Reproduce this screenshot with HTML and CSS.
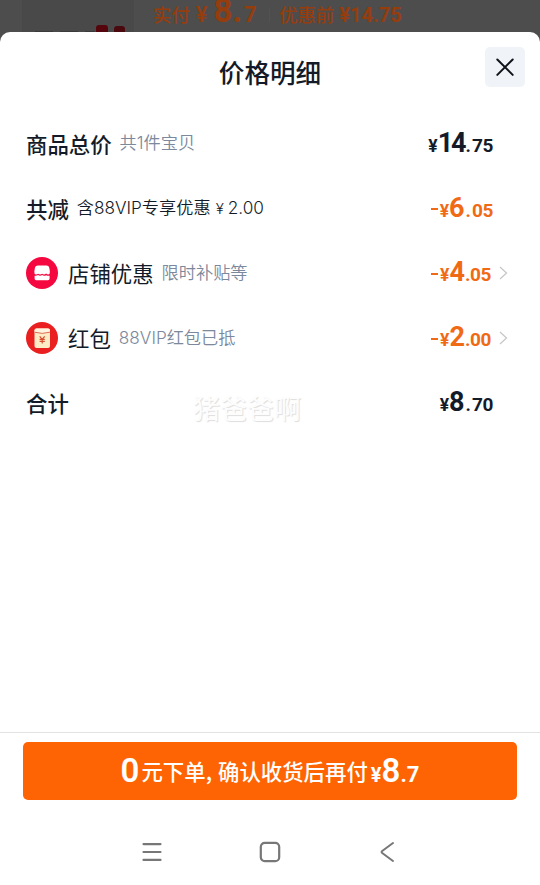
FILE: index.html
```html
<!DOCTYPE html>
<html lang="zh-CN">
<head>
  <meta charset="UTF-8" />
  <title>价格明细</title>
  <link rel="stylesheet" href="styles.css">
</head>
<body>

<header class="backdrop">
  <div class="thumb">
    <svg width="112" height="32" viewBox="0 0 112 32">
      <path d="M13 31.500h60" stroke="#3b3a3b" stroke-dasharray="18 7" />
      <rect x="74" y="25" width="12" height="9" rx="3" fill="#56050d" />
      <rect x="92" y="26" width="11" height="8" rx="3" fill="#4b080e" />
    </svg>
  </div>
  <div class="paid">
    <span class="paid-label">实付</span>
    <span class="paid-yen">¥</span>
    <span class="paid-int">8.</span>
    <span class="paid-dec">7</span>
    <span class="paid-line"></span>
    <span class="before-label">优惠前</span>
    <span class="before-price">¥14.75</span>
  </div>
</header>

<main class="sheet">
  <div class="sheet-head">
    <h1>价格明细</h1>
    <button class="close" aria-label="关闭">
      <svg width="40" height="40" viewBox="0 0 40 40" fill="none" stroke="#10131a" stroke-width="2" stroke-linecap="round">
        <path d="M12.300 12.500l15.400 15.400M27.700 12.500L12.300 27.900" />
      </svg>
    </button>
  </div>

  <div class="rows">
    <div class="row">
      <span class="name">商品总价</span>
      <span class="note">共1件宝贝</span>
      <span class="price"><span class="yen">¥</span><span class="int tight">14</span><span class="dot">.</span><span class="dec">75</span></span>
    </div>
    <div class="row">
      <span class="name">共减</span>
      <span class="note dark">含88VIP专享优惠<span class="note-yen">¥</span>2.00</span>
      <span class="price off"><span class="minus"></span><span class="yen">¥</span><span class="int">6</span><span class="dot">.</span><span class="dec">05</span></span>
    </div>
    <div class="row link">
      <svg class="icon" width="32" height="32" viewBox="0 0 32 32">
        <circle cx="16" cy="16" r="16" fill="#f5073f" />
        <path d="M12 8.500h8.500q2.300 0 2.700 2l.7 4q.3 2.600-1.700 2.900-1.200 0-2.100-.9-1.900 1.600-4 .3-2 1.300-4 0-1 .7-2.100.6-2-.3-1.700-2.900l.7-4q.4-2 3-2z" fill="#fff" />
        <path d="M8.600 18.700q1.900.4 3.400-.6 2 1.200 4.100 0 2 1.200 4.100.1 1.400.9 3.400.5v2.900q0 1.700-1.600 1.700H10.200q-1.600 0-1.600-1.700z" fill="#fff" />
      </svg>
      <span class="name light">店铺优惠</span>
      <span class="note">限时补贴等</span>
      <span class="price off"><span class="minus"></span><span class="yen">¥</span><span class="int">4</span><span class="dec">.05</span></span>
      <svg class="arrow" width="9" height="14" viewBox="0 0 9 14" fill="none" stroke="#c6c8cb" stroke-width="1.300"><path d="M1 1l6.500 6L1 13" /></svg>
    </div>
    <div class="row link">
      <svg class="icon" width="32" height="32" viewBox="0 0 32 32">
        <circle cx="16" cy="16" r="16" fill="#ea2020" />
        <rect x="8.500" y="6.500" width="15.500" height="19.500" rx="2" fill="#fdebc5" />
        <path d="M8.500 8.500q0-2 2-2H22q2 0 2 2v1.700q-7.700 2.400-15.500 0z" fill="#fff4df" />
        <path d="M8.500 10.200q7.700 2.400 15.500 0" fill="none" stroke="#df6b52" stroke-width="1" />
        <path d="M13.700 14.300l2.500 3 2.500-3M16.200 17.300v4.200M13.600 17.400h5.200M13.600 19.400h5.200" fill="none" stroke="#d94d31" stroke-width="1.200" />
      </svg>
      <span class="name light">红包</span>
      <span class="note">88VIP红包已抵</span>
      <span class="price off"><span class="minus"></span><span class="yen">¥</span><span class="int">2</span><span class="dec">.00</span></span>
      <svg class="arrow" width="9" height="14" viewBox="0 0 9 14" fill="none" stroke="#c6c8cb" stroke-width="1.300"><path d="M1 1l6.500 6L1 13" /></svg>
    </div>
    <div class="row">
      <span class="name">合计</span>
      <span class="price"><span class="yen">¥</span><span class="int">8</span><span class="dot">.</span><span class="dec">70</span></span>
    </div>
    <span class="watermark">猪爸爸啊</span>
  </div>
</main>

<footer class="bar">
  <button class="submit">
    <span class="zero">0</span>
    <span class="submit-text">元下单<span class="comma">,</span>确认收货后再付</span>
    <span class="submit-yen">¥</span>
    <span class="submit-int">8</span>
    <span class="submit-dec">.7</span>
  </button>
</footer>

<nav class="system-nav">
  <svg width="22" height="22" viewBox="0 0 22 22" fill="none" stroke="#777" stroke-width="2.200" stroke-linecap="round"><path d="M2.500 3.100h17M2.500 11h17M2.500 18.900h17" /></svg>
  <svg width="22" height="22" viewBox="0 0 22 22" fill="none" stroke="#777" stroke-width="2.200"><rect x="1.800" y="1.800" width="18.400" height="18.400" rx="4" /></svg>
  <svg width="22" height="22" viewBox="0 0 22 22" fill="none" stroke="#777" stroke-width="2" stroke-linecap="round" stroke-linejoin="round"><path d="M16 2L5.200 10q-1.200 1 0 2L16 20" /></svg>
</nav>

</body>
</html>
```
FILE: styles.css
```css
* {
  box-sizing: border-box;
}

body {
  margin: 0;
  height: 885px;
  display: flex;
  flex-direction: column;
  overflow: hidden;
  background: #4d4d4d;
  color: #141b28;
  font-family: "Noto Sans CJK SC", sans-serif;
}

button {
  border: none;
  padding: 0;
  font-family: inherit;
  cursor: pointer;
}

.backdrop {
  height: 32px;
  display: flex;
  flex-shrink: 0;
  color: #963d0e;
}

.thumb {
  width: 112px;
  height: 32px;
  margin-left: 22px;
  background: #494949;
}

.paid {
  display: flex;
  align-items: baseline;
  height: 24px;
  margin-left: 19px;
  padding-top: 1px;
  line-height: 19px;
  white-space: nowrap;
}

.paid-label,
.before-label {
  font-size: 18.4px;
  font-weight: 500;
}

.paid-yen {
  margin-left: 6px;
  font: 500 22px/20px Roboto, sans-serif;
}

.paid-int {
  margin-left: 6px;
  font: bold 33px/20px Roboto, sans-serif;
}

.paid-dec {
  margin-left: 2px;
  font: bold 22px/20px Roboto, sans-serif;
}

.paid-line {
  width: 1.5px;
  height: 14px;
  margin: 0 9px 0 12px;
  background: #963d0e;
}

.before-price {
  margin-left: 5px;
  font: bold 20px/20px Roboto, sans-serif;
}

.sheet {
  flex: 1;
  background: #fff;
  border-radius: 10px 10px 0 0;
}

.sheet-head {
  display: grid;
  grid-template-columns: 1fr auto 1fr;
  align-items: center;
  height: 79px;
  padding: 0 15px;
}

.sheet-head h1 {
  grid-column: 2;
  margin: 0;
  padding-bottom: 1px;
  font-size: 25.6px;
  font-weight: 500;
}

.close {
  justify-self: end;
  width: 40px;
  height: 40px;
  margin-top: -9px;
  background: #f0f4f8;
  border-radius: 5px;
}

.rows {
  position: relative;
  padding: 0 47px 0 26px;
}

.row {
  display: flex;
  align-items: center;
  height: 64.8px;
}

.row.link {
  margin-right: -15px;
}

.icon {
  margin-right: 10px;
}

.name {
  font-size: 21.4px;
  font-weight: 500;
}

.name.light {
  font-weight: 400;
}

.note {
  margin-left: 8px;
  color: #7c889c;
  font-family: Inter, "Noto Sans CJK SC", sans-serif;
  font-size: 17.2px;
  font-weight: 350;
  line-height: 24px;
}

.note.dark {
  color: #141b28;
}

.note-yen {
  margin: 0 4px 0 5px;
  font-size: 15px;
}

.price {
  display: flex;
  align-items: baseline;
  margin-left: auto;
  padding-top: 2px;
  font-family: Roboto, sans-serif;
  font-weight: bold;
  line-height: 30px;
}

.off {
  color: #f06a15;
}

.minus {
  align-self: center;
  width: 7px;
  height: 2px;
  margin-right: 2px;
  background: currentColor;
}

.yen {
  font-size: 17.5px;
}

.int {
  font-size: 27px;
}

.int.tight {
  letter-spacing: -2px;
}

.dot {
  margin: 0 1px;
  font-size: 18.5px;
}

.dec {
  font-size: 19px;
  letter-spacing: -0.4px;
}

.arrow {
  margin-left: 8px;
}

.watermark {
  position: absolute;
  left: 193px;
  top: 277px;
  color: #fdfdfd;
  font-size: 27px;
  line-height: 40px;
  text-shadow: 1px 1px 1px #dedede;
}

.bar {
  height: 89px;
  padding: 9px 23px 0;
  background: #fff;
  border-top: 1px solid #e2e2e2;
}

.submit {
  display: flex;
  justify-content: center;
  align-items: baseline;
  width: 100%;
  height: 58px;
  background: #ff6404;
  border-radius: 5px;
  color: #fff;
  line-height: 54px;
}

.zero,
.submit-int {
  font: 600 33px/54px Roboto, sans-serif;
}

/* the big digits sit a little below the text baseline */
.zero,
.submit-yen,
.submit-int,
.submit-dec {
  transform: translateY(1.5px);
}

.zero {
  letter-spacing: -1px;
}

.submit-text {
  margin-left: 3px;
  font-size: 21.4px;
  font-weight: 500;
}

.comma {
  margin-right: 6px;
}

.submit-yen {
  margin-left: 3px;
  font: bold 20px/54px Roboto, sans-serif;
}

.submit-dec {
  font: bold 22px/54px Roboto, sans-serif;
}

.system-nav {
  display: flex;
  justify-content: center;
  gap: 96px;
  height: 64px;
  padding-top: 20px;
  background: #fff;
}
```
